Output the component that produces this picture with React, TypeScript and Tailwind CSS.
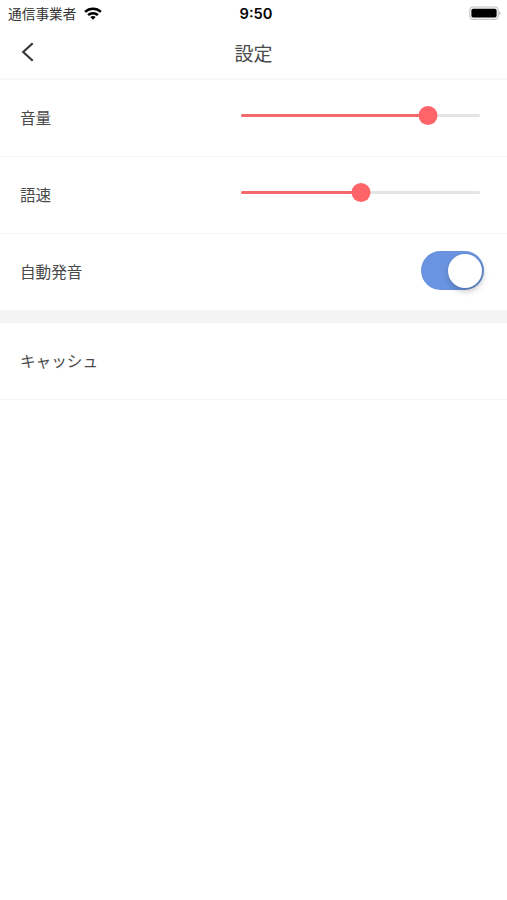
import type { ReactNode } from 'react';

function StatusBar() {
    return (
        <div className="grid h-7 grid-cols-3 items-center pl-2 pr-[6px] text-[#333]">
            <div className="flex items-center gap-2">
                <span className="whitespace-nowrap pt-[2px] text-[13.7px] leading-none">通信事業者</span>
                <svg className="h-[13px] w-[18px]" viewBox="0 0 18 13" fill="none" stroke="#000" strokeWidth="2.5">
                    <path d="M1.1 4.8C5.6.6 12.4.6 16.9 4.8" />
                    <path d="M4.1 8C6.9 5.5 11.1 5.5 13.9 8" />
                    <path d="M6.3 10.1Q9 7.9 11.7 10.1L9 12.8Z" fill="#000" stroke="none" />
                </svg>
            </div>
            <span className="pl-[3px] text-center font-['Inter'] text-[14.7px] font-semibold leading-none text-black">9:50</span>
            <svg className="mb-px h-[15px] w-8 justify-self-end" viewBox="0 0 32 15">
                <rect x="0.2" y="0.5" width="29.6" height="13.4" rx="4" fill="#c6c6c6" />
                <rect x="1.2" y="1.5" width="27.6" height="11.4" rx="3" fill="#f3f3f3" />
                <rect x="2.4" y="2.8" width="25.2" height="8.8" rx="1.8" fill="#000" />
                <path d="M30.4 5.5Q32.4 7.2 30.4 9Z" fill="#9a9a9a" />
            </svg>
        </div>
    );
}

function Row({ label, children }: { label: string; children?: ReactNode }) {
    return (
        <div className="flex h-[77px] items-center justify-between border-b border-[#f4f4f4] pl-5">
            <span className="pt-[2px] text-[15.6px] leading-none">{label}</span>
            {children}
        </div>
    );
}

function Slider({ value }: { value: number }) {
    return (
        <div className="relative mr-[27px] mb-[5px] h-[3px] w-[239px] rounded-full bg-[#e4e4e4]">
            <div className="h-full rounded-full bg-[#f4696b]" style={{ width: `${value}%` }} />
            <div
                className="absolute -top-2 size-[19px] -translate-x-1/2 rounded-full bg-[#ff6468]"
                style={{ left: `${value}%` }}
            />
        </div>
    );
}

function Toggle() {
    return (
        <div className="mr-[23px] mb-[3px] flex h-[39px] w-[63px] items-center justify-end rounded-full bg-[#6a94e0] pr-[2px]">
            <div className="size-[34px] rounded-full bg-white shadow-[1px_3px_6px_rgba(0,0,0,0.25)]" />
        </div>
    );
}

export default function App() {
    return (
        <div className="min-h-screen bg-white font-['Inter','Noto_Sans_CJK_JP',sans-serif] text-[#4a4a4a]" lang="ja">
            <StatusBar />
            <header className="grid h-[52px] grid-cols-3 items-center border-b-2 border-[#f7f7f7]">
                <svg className="ml-[21px] mb-[2px] h-5 w-[14px]" viewBox="0 0 14 20" fill="none" stroke="#333" strokeWidth="2.1">
                    <path d="M11.7 1.2L2.2 10L11.7 18.8" />
                </svg>
                <h1 className="pt-[3px] text-center text-[19px] leading-none">設定</h1>
            </header>

            <Row label="音量">
                <Slider value={78.3} />
            </Row>
            <Row label="語速">
                <Slider value={50.2} />
            </Row>
            <Row label="自動発音">
                <Toggle />
            </Row>

            <div className="h-3 bg-[#f4f4f4]" />
            <Row label="キャッシュ" />
        </div>
    );
}
